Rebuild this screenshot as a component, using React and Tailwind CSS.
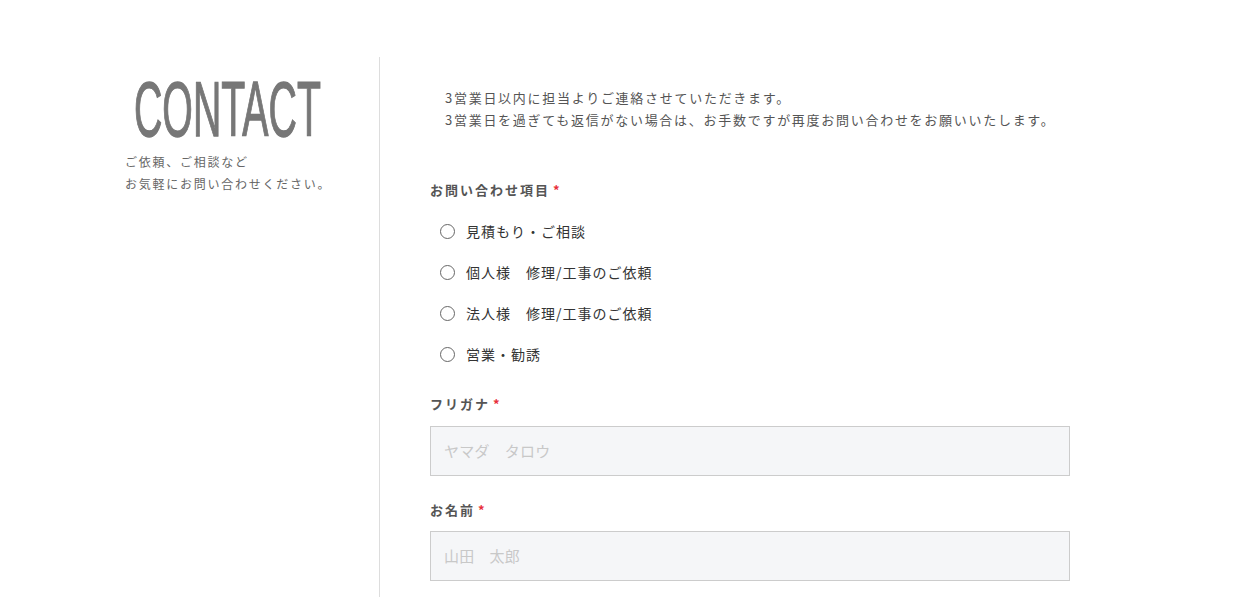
import React from "react";

const jp = { fontFamily: '"Noto Sans CJK JP", "Noto Sans", sans-serif' };

function Radio({ label }) {
  return (
    <label className="flex h-[41px] items-center pl-[10px]">
      <span className="inline-block h-[15px] w-[15px] translate-y-[1px] rounded-full border border-[#666] bg-white" />
      <span className="ml-[11px] text-[14px] leading-[22px] tracking-[1px] text-[#333]">{label}</span>
    </label>
  );
}

function Label({ children }) {
  return (
    <div className="h-[22px] text-[13px] font-bold leading-[22px] tracking-[2px] text-[#555]">
      {children}
      <span className="ml-[3px] text-[#e8303a]">*</span>
    </div>
  );
}

function Field({ placeholder }) {
  return (
    <div className="flex h-[50px] w-[640px] items-center border border-[#cccccc] bg-[#f5f6f8] pl-[13px] text-[15px] tracking-[0.2px] text-[#c8c8c8]">
      {placeholder}
    </div>
  );
}

export default function App() {
  return (
    <div className="min-h-[597px] bg-white" style={jp}>
      <div className="flex pt-[57px]">
        <div className="ml-[125px] w-[254px] shrink-0">
          <div className="mt-[14px] h-[77px] w-[200px] pl-[9px]">
            <div
              className="origin-left scale-x-[0.51] whitespace-nowrap text-[77px] font-normal leading-[77px] text-[#777] [-webkit-text-stroke:1.3px_#777]"
              style={{ fontFamily: '"Liberation Sans", Arial, sans-serif' }}
            >
              CONTACT
            </div>
          </div>
          <div className="mt-[3px] text-[12px] leading-[22px] tracking-[1.75px] text-[#666]">
            <div>ご依頼、ご相談など</div>
            <div>お気軽にお問い合わせください。</div>
          </div>
        </div>
        <div className="min-h-[560px] border-l border-[#dddddd] pl-[50px] pt-[30px]">
          <div className="pl-[15px] text-[13px] leading-[22px] tracking-[1.72px] text-[#555]">
            <div>3営業日以内に担当よりご連絡させていただきます。</div>
            <div>3営業日を過ぎても返信がない場合は、お手数ですが再度お問い合わせをお願いいたします。</div>
          </div>
          <div className="mt-[48px]">
            <Label>お問い合わせ項目</Label>
            <div className="mt-[9px]">
              <Radio label="見積もり・ご相談" />
              <Radio label="個人様　修理/工事のご依頼" />
              <Radio label="法人様　修理/工事のご依頼" />
              <Radio label="営業・勧誘" />
            </div>
          </div>
          <div className="mt-[19px]">
            <Label>フリガナ</Label>
            <div className="mt-[11px]">
              <Field placeholder="ヤマダ　タロウ" />
            </div>
          </div>
          <div className="mt-[23px]">
            <Label>お名前</Label>
            <div className="mt-[10px]">
              <Field placeholder="山田　太郎" />
            </div>
          </div>
        </div>
      </div>
    </div>
  );
}
